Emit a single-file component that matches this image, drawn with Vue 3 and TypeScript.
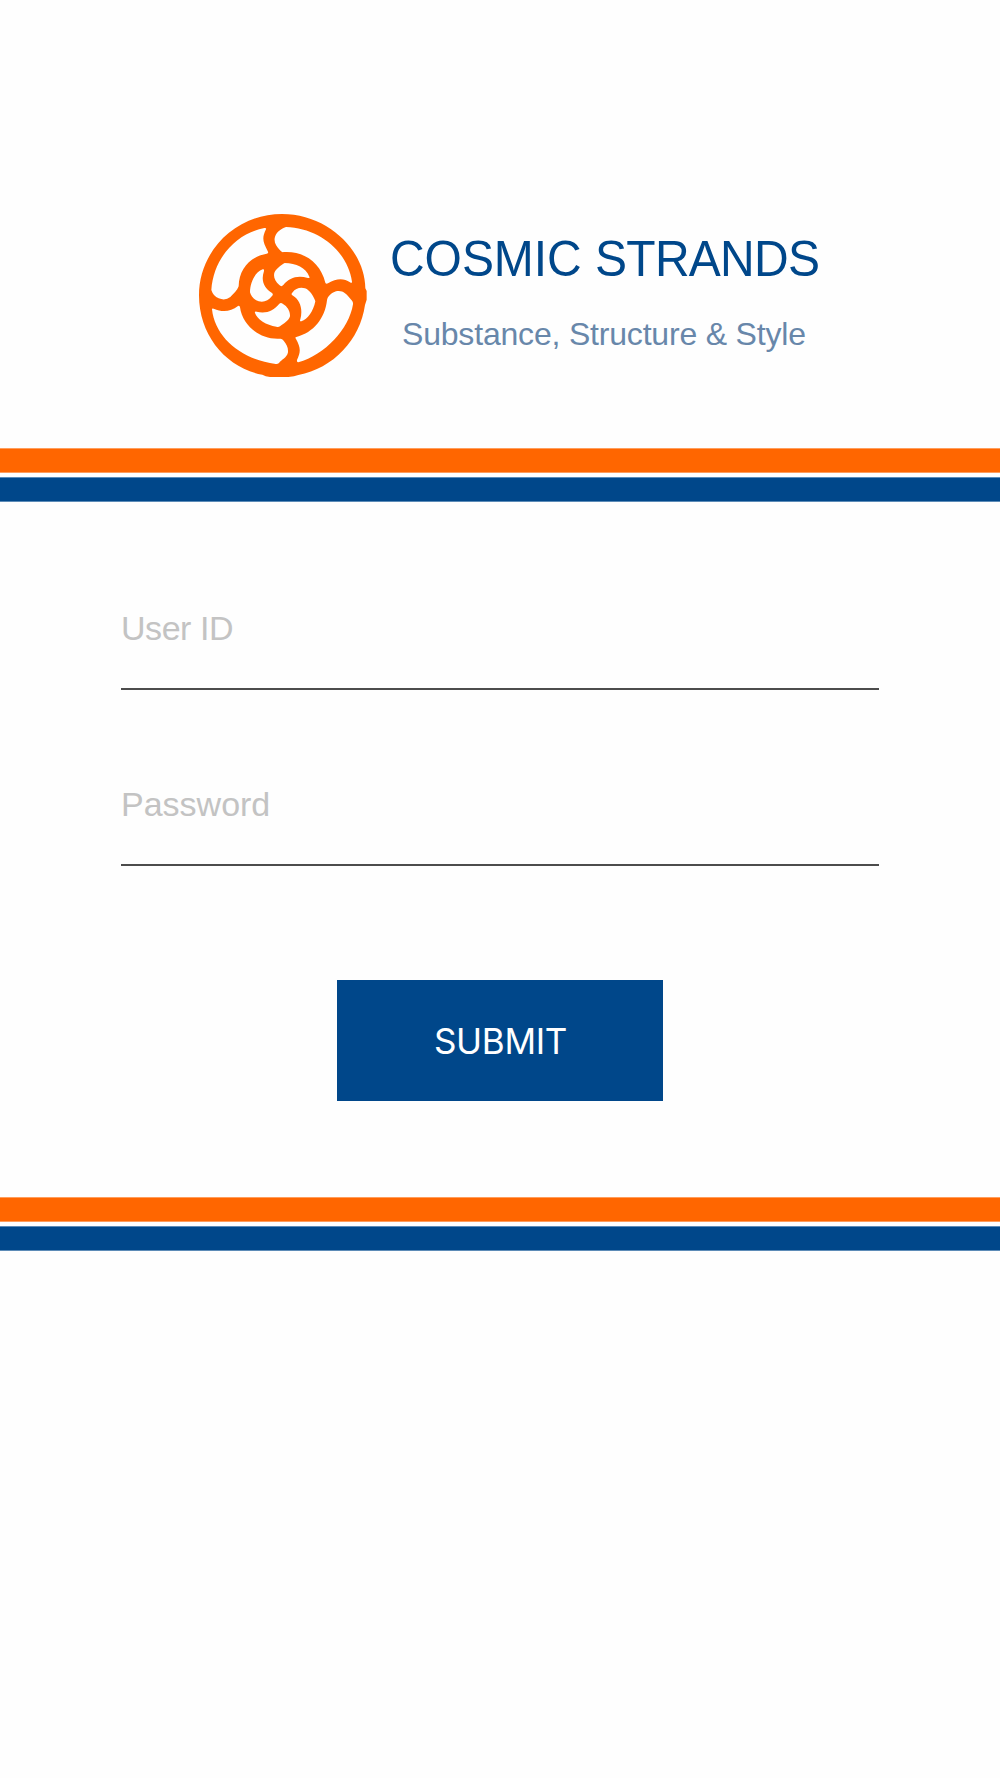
<script setup lang="ts">
import { reactive } from 'vue'

const form = reactive({ userId: '', password: '' })
</script>

<template>
  <main class="page">
    <header class="brand">
      <svg class="logo" viewBox="0 0 558 540" aria-hidden="true">
        <path
          class="mark"
          fill-rule="evenodd"
          d="M276 27C414 27 525 136 526 250L530 258V284L525 300C510 405 430 490 325 510Q314 514 295 516H240Q226 514 217 509C108 489 27 391 27 271C27 136 139 27 276 27Z
          M64 255C70 163 134 87 223 69Q230 68 228 73C216 98 217 109 234 140Q236 145 230 146C179 156 147 193 146 244C142 257 130 267 121 276Q106 288 86 280Q70 274 64 255Z
          M288 66C386 69 472 137 486 230Q486 236 480 232C461 219 439 220 414 235Q408 238 406 233C392 175 344 137 281 141Q275 143 270 136C260 125 252 114 254 100C256 84 272 71 288 66Z
          M411 286C412 275 424 264 438 259C456 254 470 266 479 279C485 286 490 289 489 298C477 372 405 450 325 472Q320 472 321 465C332 442 333 429 318 402Q314 397 319 396C371 383 405 340 411 286Z
          M66 313Q66 309 71 311C98 323 122 320 144 303Q149 300 150 307C157 360 208 405 270 401Q276 400 281 407C290 418 295 428 294 442C291 459 274 464 267 474Q263 478 257 477C155 464 75 398 66 313Z
          M218 193Q223 191 222 198C212 227 222 250 246 264Q251 268 246 273C235 287 222 293 206 289C192 285 182 272 180 262C180 232 195 202 218 193Z
          M284 174C318 174 348 189 358 215Q360 220 354 219C320 210 298 219 280 240Q274 247 268 240C254 229 249 213 254 201C259 191 274 180 284 174Z
          M307 271Q302 267 308 262C316 250 331 246 345 250C360 255 372 276 376 289C370 319 353 343 334 349Q328 350 331 343C339 314 331 285 307 271Z
          M195 324Q193 319 200 320C229 327 250 317 268 296Q273 291 279 297C292 304 301 319 300 334C296 348 280 356 270 364Q265 367 259 365C229 361 201 343 195 324Z"
        />
      </svg>
      <div class="wording">
        <h1><span class="cosmic">COSMIC</span> <span class="strands">STRANDS</span></h1>
        <p>Substance, Structure &amp; Style</p>
      </div>
    </header>

    <div class="stripes"><i class="orange"></i><i class="blue"></i></div>

    <form class="login" @submit.prevent>
      <input v-model="form.userId" class="user" type="text" placeholder="User ID" aria-label="User ID" />
      <input v-model="form.password" class="second" type="password" placeholder="Password" aria-label="Password" />
      <button type="submit">SUBMIT</button>
    </form>

    <div class="stripes"><i class="orange"></i><i class="blue"></i></div>
  </main>
</template>

<style>
body {
  background: #fefefe;
}
</style>

<style scoped>
.page {
  box-sizing: border-box;
  width: 100%;
  min-height: 1778px;
  background: #fefefe;
  font-family: "Liberation Sans", Arial, sans-serif;
}
.brand {
  box-sizing: border-box;
  display: flex;
  height: 448px;
  padding: 205px 0 0 190px;
}
.logo {
  flex: none;
  width: 186px;
  height: 180px;
}
.mark {
  fill: #ff6600;
}
.wording {
  display: flex;
  flex-direction: column;
  padding: 26px 0 0 14px;
}
h1,
p {
  margin: 0;
  font-weight: 400;
  white-space: nowrap;
}
h1 {
  color: #00478a;
  font-size: 48px;
  line-height: 56px;
  transform: scaleY(1.045);
}
.cosmic {
  letter-spacing: -0.05px;
}
.strands {
  letter-spacing: -0.75px;
}
p {
  margin: 28px 0 0 12px;
  color: #6887aa;
  font-size: 32px;
  line-height: 38px;
  letter-spacing: -0.19px;
}
.stripes {
  display: flex;
  flex-direction: column;
  gap: 4px;
}
.stripes i {
  box-sizing: border-box;
  height: 25px;
}
.orange {
  background: #ff6600;
  border: solid #ff9d5c;
  border-width: 1px 0;
}
.blue {
  background: #00478a;
  border: solid #5c8bb7;
  border-width: 1px 0;
}
.login {
  box-sizing: border-box;
  display: flex;
  flex-direction: column;
  height: 695px;
  padding: 66px 121px 0;
}
input {
  box-sizing: border-box;
  width: 758px;
  height: 122px;
  padding: 1px 0 0;
  border: 0;
  border-bottom: 2px solid #4c4c4c;
  border-radius: 0;
  outline: 0;
  background: transparent;
  color: #333;
  font: 34px "Liberation Sans", Arial, sans-serif;
}
input::placeholder {
  color: #c3c3c3;
  opacity: 1;
}
.user {
  letter-spacing: -0.45px;
}
.second {
  margin-top: 54px;
}
button {
  align-self: center;
  width: 326px;
  height: 121px;
  margin-top: 114px;
  padding: 0 0 0 1px;
  border: 0;
  background: #00478a;
  color: #fff;
  font: 400 35px Inter, sans-serif;
  letter-spacing: -0.3px;
}
</style>
